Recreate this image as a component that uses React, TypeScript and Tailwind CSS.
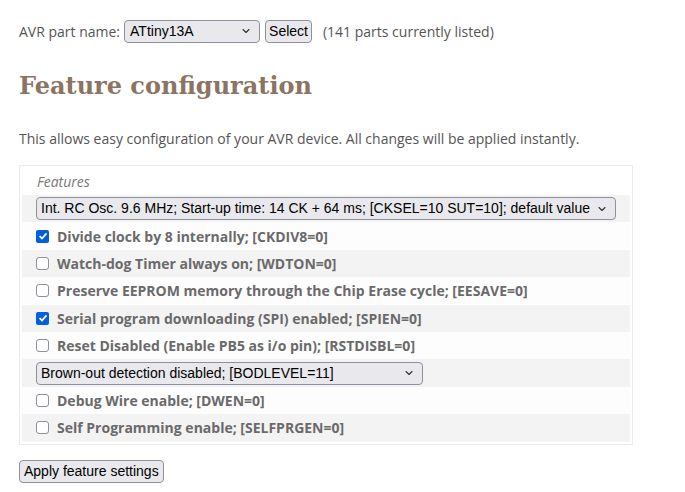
import { ChevronDown } from "lucide-react";

const sans = "font-['Open_Sans',sans-serif]";
const ctl = "font-['Liberation_Sans',Arial,sans-serif]";

type Row =
  | { kind: "check"; label: string; checked: boolean }
  | { kind: "select"; value: string; width: string };

const rows: Row[] = [
  {
    kind: "select",
    value: "Int. RC Osc. 9.6 MHz; Start-up time: 14 CK + 64 ms; [CKSEL=10 SUT=10]; default value",
    width: "w-[580px]",
  },
  { kind: "check", label: "Divide clock by 8 internally; [CKDIV8=0]", checked: true },
  { kind: "check", label: "Watch-dog Timer always on; [WDTON=0]", checked: false },
  { kind: "check", label: "Preserve EEPROM memory through the Chip Erase cycle; [EESAVE=0]", checked: false },
  { kind: "check", label: "Serial program downloading (SPI) enabled; [SPIEN=0]", checked: true },
  { kind: "check", label: "Reset Disabled (Enable PB5 as i/o pin); [RSTDISBL=0]", checked: false },
  { kind: "select", value: "Brown-out detection disabled; [BODLEVEL=11]", width: "w-[387px]" },
  { kind: "check", label: "Debug Wire enable; [DWEN=0]", checked: false },
  { kind: "check", label: "Self Programming enable; [SELFPRGEN=0]", checked: false },
];

function FakeSelect({ value, width }: { value: string; width: string }) {
  return (
    <div
      className={`${width} h-[23px] flex items-center justify-between rounded-[4px] border border-[#8f8f9d] bg-[#e9e9ed] pl-[4px] pr-[7px] text-[14px] text-black ${ctl}`}
    >
      <span className="whitespace-nowrap">{value}</span>
      <ChevronDown size={12} strokeWidth={2.2} className="text-[#333] shrink-0" />
    </div>
  );
}

function Checkbox({ checked }: { checked: boolean }) {
  return checked ? (
    <span className="w-[13px] h-[13px] rounded-[2px] bg-[#0060df] flex items-center justify-center shrink-0">
      <svg width="10" height="10" viewBox="0 0 10 10">
        <path d="M1.6 5.2 L4 7.5 L8.5 2.3" fill="none" stroke="white" strokeWidth="1.8" />
      </svg>
    </span>
  ) : (
    <span className="w-[13px] h-[13px] rounded-[3px] border border-[#8f8f9d] bg-white shrink-0" />
  );
}

export default function App() {
  return (
    <div className={`min-h-screen bg-white text-[#555] text-[14px] ${sans}`}>
      <div className="px-[19px] pt-[19px]">
        {/* part chooser */}
        <div className="flex items-center h-[24px]">
          <span className="mr-[4px]">AVR part name:</span>
          <div
            className={`w-[136px] h-[23px] flex items-center justify-between rounded-[4px] border border-[#8f8f9d] bg-[#e9e9ed] pl-[5px] pr-[7px] text-[14px] text-black ${ctl}`}
          >
            <span>ATtiny13A</span>
            <ChevronDown size={12} strokeWidth={2.2} className="text-[#333]" />
          </div>
          <button
            className={`ml-[5px] h-[23px] px-[3px] rounded-[4px] border border-[#8f8f9d] bg-[#e9e9ed] text-[14px] text-black ${ctl}`}
          >
            Select
          </button>
          <span className="ml-[11px]">(141 parts currently listed)</span>
        </div>

        <h1 className="mt-[26px] text-[24px] leading-[34px] font-bold text-[#8c7462] font-['DejaVu_Serif',serif]">
          Feature configuration
        </h1>

        <p className="mt-[26px] leading-[20px]">
          This allows easy configuration of your AVR device. All changes will be applied instantly.
        </p>

        {/* fuse settings */}
        <div className="mt-[16px] w-[614px] border border-[#ebebeb] px-[2px] pt-[5px] pb-[2px]">
          <div className="pl-[15px] h-[24px] leading-[22px] italic text-[#777]">Features</div>
          <div className="flex flex-col">
            {rows.map((r, i) => (
              <div
                key={i}
                className={`h-[27.4px] flex items-center pl-[14px] ${i % 2 === 0 ? "bg-[#f3f3f3]" : "bg-[#fdfdfd]"}`}
              >
                {r.kind === "select" ? (
                  <FakeSelect value={r.value} width={r.width} />
                ) : (
                  <label className="flex items-center gap-[8px] font-bold text-[#6a6a6a]">
                    <Checkbox checked={r.checked} />
                    <span>{r.label}</span>
                  </label>
                )}
              </div>
            ))}
          </div>
        </div>

        <button
          className={`mt-[15px] h-[23px] px-[4px] rounded-[4px] border border-[#8f8f9d] bg-[#e9e9ed] text-[14px] text-black ${ctl}`}
        >
          Apply feature settings
        </button>
      </div>
    </div>
  );
}
